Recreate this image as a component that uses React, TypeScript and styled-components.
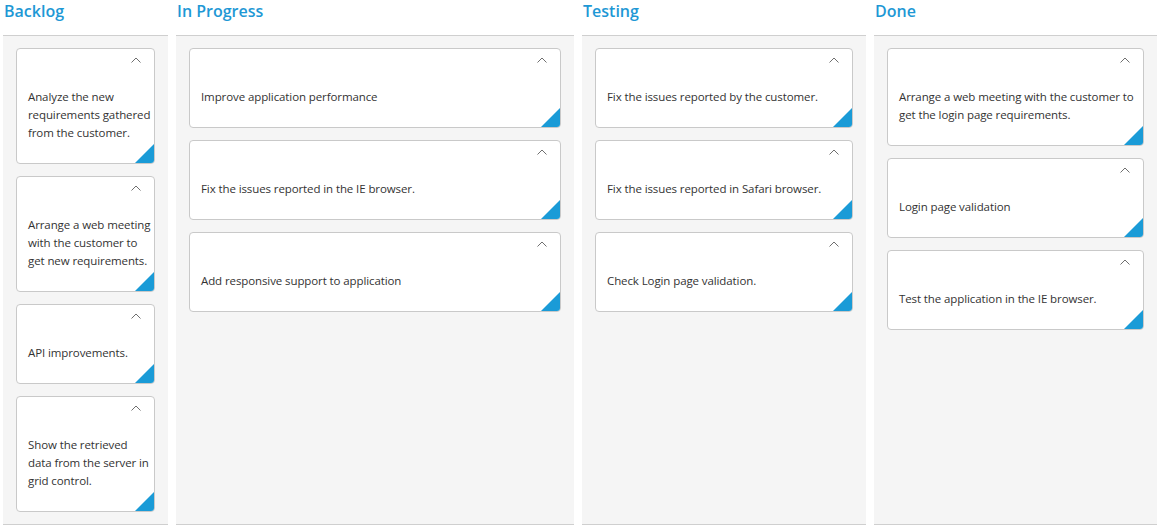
import React from "react";
import styled, { createGlobalStyle } from "styled-components";

const GlobalStyle = createGlobalStyle`
  html, body { margin: 0; padding: 0; background: #ffffff; }
  body { font-family: "Open Sans", "Noto Sans", sans-serif; }
`;

type Col = { title: string; width: number; cards: string[] };

const columns: Col[] = [
  {
    title: "Backlog",
    width: 165,
    cards: [
      "Analyze the new requirements gathered from the customer.",
      "Arrange a web meeting with the customer to get new requirements.",
      "API improvements.",
      "Show the retrieved data from the server in grid control.",
    ],
  },
  {
    title: "In Progress",
    width: 398,
    cards: [
      "Improve application performance",
      "Fix the issues reported in the IE browser.",
      "Add responsive support to application",
    ],
  },
  {
    title: "Testing",
    width: 284,
    cards: [
      "Fix the issues reported by the customer.",
      "Fix the issues reported in Safari browser.",
      "Check Login page validation.",
    ],
  },
  {
    title: "Done",
    width: 283,
    cards: [
      "Arrange a web meeting with the customer to get the login page requirements.",
      "Login page validation",
      "Test the application in the IE browser.",
    ],
  },
];

const Board = styled.div`
  display: flex;
  gap: 8px;
  padding-left: 3px;
  height: 530px;
  box-sizing: border-box;
`;

const Column = styled.section<{ $w: number }>`
  width: ${(p) => p.$w}px;
  flex: none;
  display: flex;
  flex-direction: column;
`;

const Header = styled.h2`
  margin: 0;
  height: 35px;
  padding-left: 1px;
  font-family: "Open Sans", "Noto Sans", sans-serif;
  font-size: 16px;
  font-weight: 600;
  line-height: 23px;
  color: #1e98d5;
`;

const Body = styled.div`
  height: 490px;
  box-sizing: border-box;
  background: #f5f5f5;
  border-top: 1px solid #cfcfcf;
  border-bottom: 1px solid #cfcfcf;
  padding: 12px 13px;
  display: flex;
  flex-direction: column;
  gap: 12px;
`;

const Card = styled.div`
  position: relative;
  background: #ffffff;
  border: 1px solid #c9c9c9;
  border-radius: 4px;
  overflow: hidden;
  display: flex;
  flex-direction: column;
`;

const CardHeader = styled.div`
  height: 28px;
  display: flex;
  justify-content: flex-end;
  align-items: flex-start;
  padding: 8px 13px 0 0;
  box-sizing: border-box;
`;

const CardText = styled.div`
  padding: 11px 2px 21px 11px;
  font-family: "Open Sans", "Noto Sans", sans-serif;
  font-size: 11.5px;
  letter-spacing: -0.1px;
  line-height: 18px;
  color: #333333;
`;

const Corner = styled.div`
  position: absolute;
  right: 0;
  bottom: 0;
  width: 0;
  height: 0;
  border-style: solid;
  border-width: 0 0 19px 19px;
  border-color: transparent transparent #1a9bd7 transparent;
`;

const Chevron = () => (
  <svg width="10" height="6" viewBox="0 0 10 6" aria-hidden="true">
    <polyline points="0.5,5.5 5,1 9.5,5.5" fill="none" stroke="#6f6f6f" strokeWidth="1" />
  </svg>
);

export default function App() {
  return (
    <>
      <GlobalStyle />
      <Board>
        {columns.map((c) => (
          <Column key={c.title} $w={c.width}>
            <Header>{c.title}</Header>
            <Body>
              {c.cards.map((t) => (
                <Card key={t}>
                  <CardHeader>
                    <Chevron />
                  </CardHeader>
                  <CardText>{t}</CardText>
                  <Corner />
                </Card>
              ))}
            </Body>
          </Column>
        ))}
      </Board>
    </>
  );
}
